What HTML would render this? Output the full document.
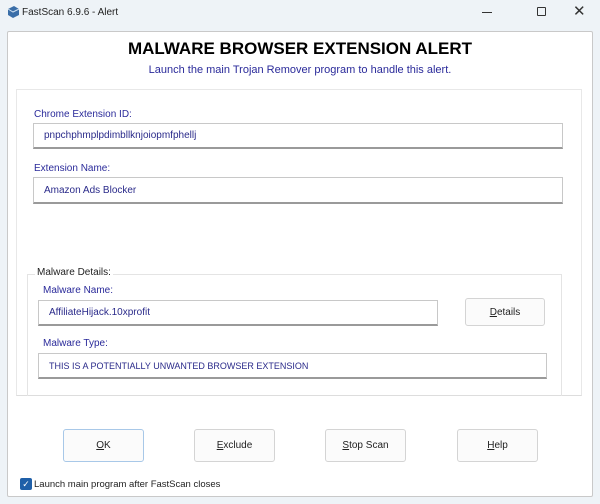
<!DOCTYPE html><html><head><style>
*{margin:0;padding:0;box-sizing:border-box}
body{width:600px;height:504px;background:#eef3f7;font-family:"Liberation Sans",sans-serif;position:relative;overflow:hidden;font-size:11px}
.a{position:absolute}
.panel{left:7px;top:31px;width:586px;height:466px;background:#fff;border:1px solid #c9c9c9;border-radius:2px}
.lbl{color:#2a2a9a;font-size:10px}
.in{background:#fff;border:1px solid #c8c8c8;border-bottom:2px solid #9a9a9a;color:#2a2a8a;font-size:10px;padding-left:10px;display:flex;align-items:center}
.btn{background:#fbfbfb;border:1px solid #d4d4d4;border-radius:3px;display:flex;align-items:center;justify-content:center;font-size:10px;color:#222}
</style></head><body>
<svg class="a" style="left:6px;top:5px" width="14" height="14" viewBox="0 0 14 14"><path d="M2 4L8 1L13 4L13 10L7 13L2 10Z" fill="#3a6ea8"/><path d="M2 4L7 7L13 4" stroke="#cfe0f0" fill="none"/></svg>
<div class="a" style="left:22px;top:7px;font-size:10px;color:#222">FastScan 6.9.6 - Alert</div>
<div class="a" style="left:482px;top:12px;width:10px;height:1px;background:#333"></div>
<div class="a" style="left:537px;top:7px;width:9px;height:9px;border:1px solid #333;border-radius:1px"></div>
<div class="a" style="left:573px;top:2px;font-size:15px;color:#333">✕</div>
<div class="a panel"></div>
<div class="a" style="left:0;width:600px;top:39px;text-align:center;font-weight:bold;font-size:17px;color:#000">MALWARE BROWSER EXTENSION ALERT</div>
<div class="a" style="left:0;width:600px;top:64px;text-align:center;font-size:11px;color:#2a2a9a">Launch the main Trojan Remover program to handle this alert.</div>
<div class="a" style="left:16px;top:89px;width:566px;height:307px;border:1px solid #e8e8e8;border-bottom:1px solid #ddd"></div>
<div class="a lbl" style="left:34px;top:109px">Chrome Extension ID:</div>
<div class="a in" style="left:33px;top:123px;width:530px;height:26px">pnpchphmplpdimbllknjoiopmfphellj</div>
<div class="a lbl" style="left:34px;top:163px">Extension Name:</div>
<div class="a in" style="left:33px;top:177px;width:530px;height:27px">Amazon Ads Blocker</div>
<div class="a" style="left:27px;top:274px;width:535px;height:122px;border:1px solid #e4e4e4;border-bottom:none"></div>
<div class="a" style="left:35px;top:267px;background:#fff;padding:0 2px;font-size:10px;color:#222">Malware Details:</div>
<div class="a lbl" style="left:43px;top:285px">Malware Name:</div>
<div class="a in" style="left:38px;top:300px;width:400px;height:26px">AffiliateHijack.10xprofit</div>
<div class="a btn" style="left:465px;top:298px;width:80px;height:28px"><u>D</u>etails</div>
<div class="a lbl" style="left:43px;top:338px">Malware Type:</div>
<div class="a in" style="left:38px;top:353px;width:509px;height:26px;font-size:9px">THIS IS A POTENTIALLY UNWANTED BROWSER EXTENSION</div>
<div class="a btn" style="left:63px;top:429px;width:81px;height:33px;border-color:#a8c8e8"><u>O</u>K</div>
<div class="a btn" style="left:194px;top:429px;width:81px;height:33px"><u>E</u>xclude</div>
<div class="a btn" style="left:325px;top:429px;width:81px;height:33px"><u>S</u>top Scan</div>
<div class="a btn" style="left:457px;top:429px;width:81px;height:33px"><u>H</u>elp</div>
<div class="a" style="left:20px;top:478px;width:12px;height:12px;background:#1f5fa8;border-radius:2px;color:#fff;font-size:9px;line-height:12px;text-align:center">✓</div>
<div class="a" style="left:34px;top:479px;font-size:9.5px;color:#222">Launch main program after FastScan closes</div>
</body></html>
